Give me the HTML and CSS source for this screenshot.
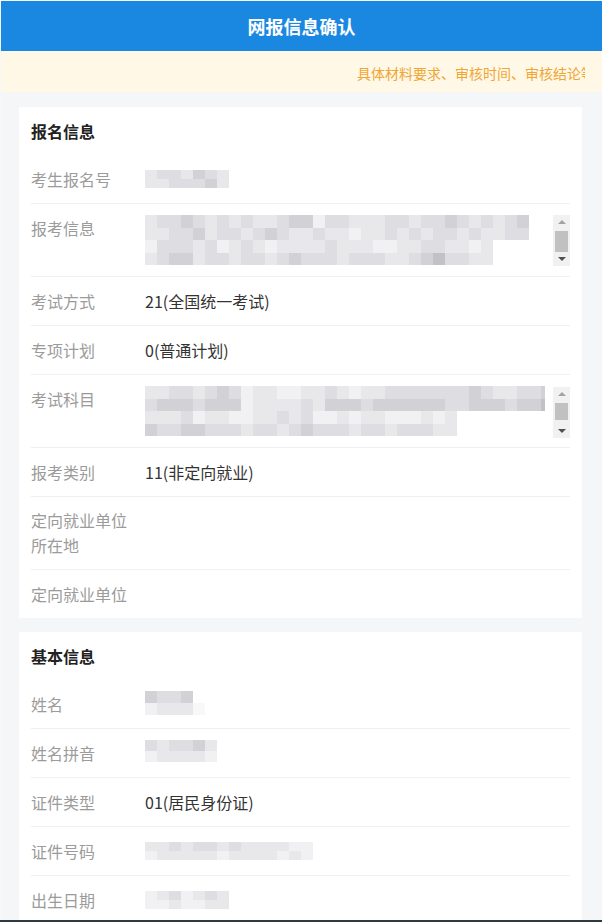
FILE: index.html
```html
<!DOCTYPE html>
<html lang="zh-CN">
<head>
<meta charset="utf-8">
<title>网报信息确认</title>
<link rel="stylesheet" href="styles.css">
</head>
<body>
<div class="app">
  <header class="topbar">网报信息确认</header>
  <div class="notice">
    <div class="notice-track"><span class="notice-text">具体材料要求、审核时间、审核结论等请关注报考点公告</span></div>
  </div>

  <section class="card">
    <h2 class="card-title">报名信息</h2>
    <div class="row">
      <div class="label">考生报名号</div>
      <div class="value">
        <div class="pix h9">
          <div class="pr"><i class="s2"></i><i class="s3"></i><i class="s3"></i><i class="s2"></i><i class="s4"></i><i class="s3"></i><i class="s2"></i></div>
          <div class="pr"><i class="s2"></i><i class="s2"></i><i class="s3"></i><i class="s3"></i><i class="s3"></i><i class="s4"></i><i class="s2"></i></div>
        </div>
      </div>
    </div>
    <div class="row">
      <div class="label">报考信息</div>
      <div class="value">
        <div class="scrollbox">
          <div class="pix h12 grow">
            <div class="pr"><i class="s2"></i><i class="s3"></i><i class="s3"></i><i class="s4"></i><i class="s3"></i><i class="s2"></i><i class="s3"></i><i class="s2"></i><i class="s3"></i><i class="s2"></i><i class="s2"></i><i class="s3"></i><i class="s4"></i><i class="s4"></i><i class="s1"></i><i class="s3"></i><i class="s3"></i><i class="s2"></i><i class="s2"></i><i class="s2"></i><i class="s3"></i><i class="s3"></i><i class="s2"></i><i class="s3"></i><i class="s3"></i><i class="s4"></i><i class="s3"></i><i class="s2"></i><i class="s3"></i><i class="s2"></i><i class="s3"></i><i class="s4"></i></div>
            <div class="pr"><i class="s2"></i><i class="s2"></i><i class="s3"></i><i class="s3"></i><i class="s4"></i><i class="s2"></i><i class="s3"></i><i class="s3"></i><i class="s2"></i><i class="s3"></i><i class="s4"></i><i class="s3"></i><i class="s2"></i><i class="s2"></i><i class="s3"></i><i class="s2"></i><i class="s2"></i><i class="s1"></i><i class="s2"></i><i class="s2"></i><i class="s3"></i><i class="s2"></i><i class="s3"></i><i class="s2"></i><i class="s3"></i><i class="s3"></i><i class="s2"></i><i class="s3"></i><i class="s2"></i><i class="s2"></i><i class="s3"></i><i class="s3"></i></div>
            <div class="pr"><i class="s1"></i><i class="s3"></i><i class="s3"></i><i class="s3"></i><i class="s2"></i><i class="s3"></i><i class="s1"></i><i class="s2"></i><i class="s3"></i><i class="s2"></i><i class="s1"></i><i class="s2"></i><i class="s2"></i><i class="s2"></i><i class="s2"></i><i class="s3"></i><i class="s2"></i><i class="s2"></i><i class="s2"></i><i class="s1"></i><i class="s1"></i><i class="s2"></i><i class="s2"></i><i class="s3"></i><i class="s3"></i><i class="s2"></i><i class="s2"></i><i class="s1"></i><i class="s2"></i></div>
            <div class="pr"><i class="s2"></i><i class="s3"></i><i class="s4"></i><i class="s4"></i><i class="s2"></i><i class="s3"></i><i class="s3"></i><i class="s2"></i><i class="s3"></i><i class="s3"></i><i class="s2"></i><i class="s3"></i><i class="s4"></i><i class="s3"></i><i class="s3"></i><i class="s3"></i><i class="s2"></i><i class="s3"></i><i class="s3"></i><i class="s3"></i><i class="s2"></i><i class="s2"></i><i class="s3"></i><i class="s4"></i><i class="s5"></i><i class="s3"></i><i class="s3"></i><i class="s2"></i><i class="s2"></i></div>
          </div>
          <div class="sbar sbar-a">
            <div class="sbtn"><span class="arr-up"></span></div>
            <div class="thumb"></div>
            <div class="sbtn"><span class="arr-down"></span></div>
          </div>
        </div>
      </div>
    </div>
    <div class="row">
      <div class="label">考试方式</div>
      <div class="value">21(全国统一考试)</div>
    </div>
    <div class="row">
      <div class="label">专项计划</div>
      <div class="value">0(普通计划)</div>
    </div>
    <div class="row">
      <div class="label">考试科目</div>
      <div class="value">
        <div class="scrollbox">
          <div class="pix h12 grow">
            <div class="pr"><i class="s2"></i><i class="s2"></i><i class="s3"></i><i class="s3"></i><i class="s2"></i><i class="s3"></i><i class="s4"></i><i class="s3"></i><i class="s1"></i><i class="s2"></i><i class="s2"></i><i class="s1"></i><i class="s1"></i><i class="s2"></i><i class="s2"></i><i class="s3"></i><i class="s2"></i><i class="s1"></i><i class="s2"></i><i class="s2"></i><i class="s3"></i><i class="s3"></i><i class="s3"></i><i class="s3"></i><i class="s3"></i><i class="s3"></i><i class="s3"></i><i class="s4"></i><i class="s3"></i><i class="s2"></i><i class="s2"></i><i class="s3"></i><i class="s3"></i><i class="s4"></i></div>
            <div class="pr"><i class="s3"></i><i class="s4"></i><i class="s4"></i><i class="s4"></i><i class="s3"></i><i class="s4"></i><i class="s4"></i><i class="s4"></i><i class="s1"></i><i class="s2"></i><i class="s2"></i><i class="s2"></i><i class="s2"></i><i class="s3"></i><i class="s2"></i><i class="s4"></i><i class="s4"></i><i class="s4"></i><i class="s3"></i><i class="s4"></i><i class="s4"></i><i class="s4"></i><i class="s4"></i><i class="s4"></i><i class="s4"></i><i class="s3"></i><i class="s3"></i><i class="s4"></i><i class="s4"></i><i class="s4"></i><i class="s3"></i><i class="s4"></i><i class="s4"></i><i class="s5"></i></div>
            <div class="pr"><i class="s2"></i><i class="s2"></i><i class="s2"></i><i class="s3"></i><i class="s1"></i><i class="s2"></i><i class="s2"></i><i class="s1"></i><i class="s1"></i><i class="s2"></i><i class="s2"></i><i class="s3"></i><i class="s2"></i><i class="s3"></i><i class="s1"></i><i class="s1"></i><i class="s2"></i><i class="s1"></i><i class="s2"></i><i class="s2"></i><i class="s1"></i><i class="s1"></i><i class="s1"></i><i class="s2"></i><i class="s1"></i><i class="s2"></i></div>
            <div class="pr"><i class="s4"></i><i class="s3"></i><i class="s3"></i><i class="s4"></i><i class="s4"></i><i class="s3"></i><i class="s3"></i><i class="s3"></i><i class="s2"></i><i class="s3"></i><i class="s3"></i><i class="s2"></i><i class="s3"></i><i class="s4"></i><i class="s3"></i><i class="s3"></i><i class="s3"></i><i class="s2"></i><i class="s3"></i><i class="s3"></i><i class="s2"></i><i class="s3"></i><i class="s3"></i><i class="s3"></i><i class="s2"></i><i class="s2"></i></div>
          </div>
          <div class="sbar sbar-b">
            <div class="sbtn"><span class="arr-up"></span></div>
            <div class="thumb"></div>
            <div class="sbtn"><span class="arr-down"></span></div>
          </div>
        </div>
      </div>
    </div>
    <div class="row">
      <div class="label">报考类别</div>
      <div class="value">11(非定向就业)</div>
    </div>
    <div class="row">
      <div class="label two">定向就业单位<br>所在地</div>
      <div class="value"></div>
    </div>
    <div class="row">
      <div class="label">定向就业单位</div>
      <div class="value"></div>
    </div>
  </section>

  <section class="card">
    <h2 class="card-title">基本信息</h2>
    <div class="row">
      <div class="label">姓名</div>
      <div class="value">
        <div class="pix h12">
          <div class="pr"><i class="s4"></i><i class="s3"></i><i class="s3"></i><i class="s4"></i></div>
          <div class="pr"><i class="s1"></i><i class="s2"></i><i class="s2"></i><i class="s2"></i><i class="s0"></i></div>
        </div>
      </div>
    </div>
    <div class="row">
      <div class="label">姓名拼音</div>
      <div class="value">
        <div class="pix h10">
          <div class="pr"><i class="s3"></i><i class="s2"></i><i class="s3"></i><i class="s3"></i><i class="s4"></i><i class="s2"></i></div>
          <div class="pr"><i class="s1"></i><i class="s2"></i><i class="s2"></i><i class="s2"></i><i class="s2"></i><i class="s1"></i></div>
        </div>
      </div>
    </div>
    <div class="row">
      <div class="label">证件类型</div>
      <div class="value">01(居民身份证)</div>
    </div>
    <div class="row">
      <div class="label">证件号码</div>
      <div class="value">
        <div class="pix h9">
          <div class="pr"><i class="s2"></i><i class="s2"></i><i class="s3"></i><i class="s2"></i><i class="s3"></i><i class="s3"></i><i class="s2"></i><i class="s3"></i><i class="s2"></i><i class="s2"></i><i class="s2"></i><i class="s2"></i><i class="s1"></i><i class="s1"></i></div>
          <div class="pr"><i class="s1"></i><i class="s2"></i><i class="s2"></i><i class="s2"></i><i class="s2"></i><i class="s2"></i><i class="s1"></i><i class="s2"></i><i class="s2"></i><i class="s2"></i><i class="s2"></i><i class="s1"></i><i class="s2"></i><i class="s1"></i></div>
        </div>
      </div>
    </div>
    <div class="row">
      <div class="label">出生日期</div>
      <div class="value">
        <div class="pix h9">
          <div class="pr"><i class="s1"></i><i class="s2"></i><i class="s3"></i><i class="s1"></i><i class="s2"></i><i class="s3"></i><i class="s2"></i></div>
          <div class="pr"><i class="s1"></i><i class="s1"></i><i class="s2"></i><i class="s1"></i><i class="s1"></i><i class="s2"></i><i class="s2"></i></div>
        </div>
      </div>
    </div>
  </section>
</div>
<div class="frame-bottom"></div>
</body>
</html>
```

FILE: styles.css
```css
* { box-sizing: border-box; }

html, body {
  margin: 0;
  padding: 0;
}

body {
  background: #f7f8f9;
  padding: 1px 0 0 1px;
  font-family: "Noto Sans CJK SC", "Noto Sans", "Liberation Sans", sans-serif;
  color: #333;
  overflow: hidden;
}

.app {
  background: #f5f6f8;
  min-height: 921px;
}

.topbar {
  height: 50px;
  background: #1a88e1;
  color: #fff;
  font-size: 18px;
  font-weight: 700;
  line-height: 50px;
  text-align: center;
}

.notice {
  height: 41px;
  background: #fff8e7;
  padding: 0 17px 0 17px;
  display: flex;
  align-items: center;
}

.notice-track {
  width: 100%;
  overflow: hidden;
  white-space: nowrap;
  padding-left: 339px;
}

.notice-text {
  font-size: 14px;
  line-height: 20px;
  color: #f0a634;
}

.card {
  background: #fff;
  margin: 15px 20px 0 18px;
  padding: 0 12px;
}

.card + .card {
  margin-top: 14px;
}

.card-title {
  margin: 0;
  height: 48px;
  padding-top: 11px;
  font-size: 16px;
  font-weight: 700;
  line-height: 26px;
  color: #222;
}

.row {
  display: flex;
  padding: 11px 0;
  border-bottom: 1px solid #eef0f2;
  font-size: 16px;
  line-height: 26px;
}

.row:last-child {
  border-bottom: 0;
}

.label {
  width: 114px;
  flex-shrink: 0;
  color: #9b9b9b;
}

.label.two {
  line-height: 25px;
}

.value {
  flex: 1;
  min-width: 0;
  color: #333;
  font-size: 16px;
}

/* pixelated (obscured) values */
.pix {
  display: flex;
  flex-direction: column;
  filter: blur(0.5px);
}

.pr {
  display: flex;
}

.pr i {
  display: block;
  width: 12px;
  flex-shrink: 0;
}

.h9 { padding-top: 4px; }
.h9 .pr i { height: 9px; }
.h10 .pr i { height: 11px; }
.h12 .pr i { height: 12px; }
.h12.grow .pr i { height: 12.5px; }

.s0 { background: #f8f8f8; }
.s1 { background: #f1f1f3; }
.s2 { background: #e8e8eb; }
.s3 { background: #dedee2; }
.s4 { background: #d2d2d6; }
.s5 { background: #c2c2c6; }

.scrollbox {
  display: flex;
  height: 50px;
}

.grow {
  flex: 1;
  overflow: hidden;
}

/* drawn scrollbar */
.sbar {
  width: 17px;
  flex-shrink: 0;
  margin-left: 8px;
  background: #f1f1f1;
  display: flex;
  flex-direction: column;
  align-items: center;
}

.sbar-a { height: 51px; }
.sbar-b { height: 51px; margin-top: 1px; }

.sbtn {
  height: 14px;
  width: 17px;
  display: flex;
  align-items: center;
  justify-content: center;
}

.thumb {
  width: 13px;
  background: #c1c1c1;
}

.sbar-a .thumb { height: 21px; margin: 2px 0 0; }
.sbar-b .thumb { height: 17px; margin: 2px 0 4px; }

.arr-up {
  width: 0;
  height: 0;
  border-left: 4px solid transparent;
  border-right: 4px solid transparent;
  border-bottom: 4px solid #a3a3a3;
}

.arr-down {
  width: 0;
  height: 0;
  border-left: 4px solid transparent;
  border-right: 4px solid transparent;
  border-top: 4px solid #505050;
}

.frame-bottom {
  position: fixed;
  left: 0;
  right: 0;
  bottom: 0;
  height: 2px;
  background: #2e3a40;
}
```
